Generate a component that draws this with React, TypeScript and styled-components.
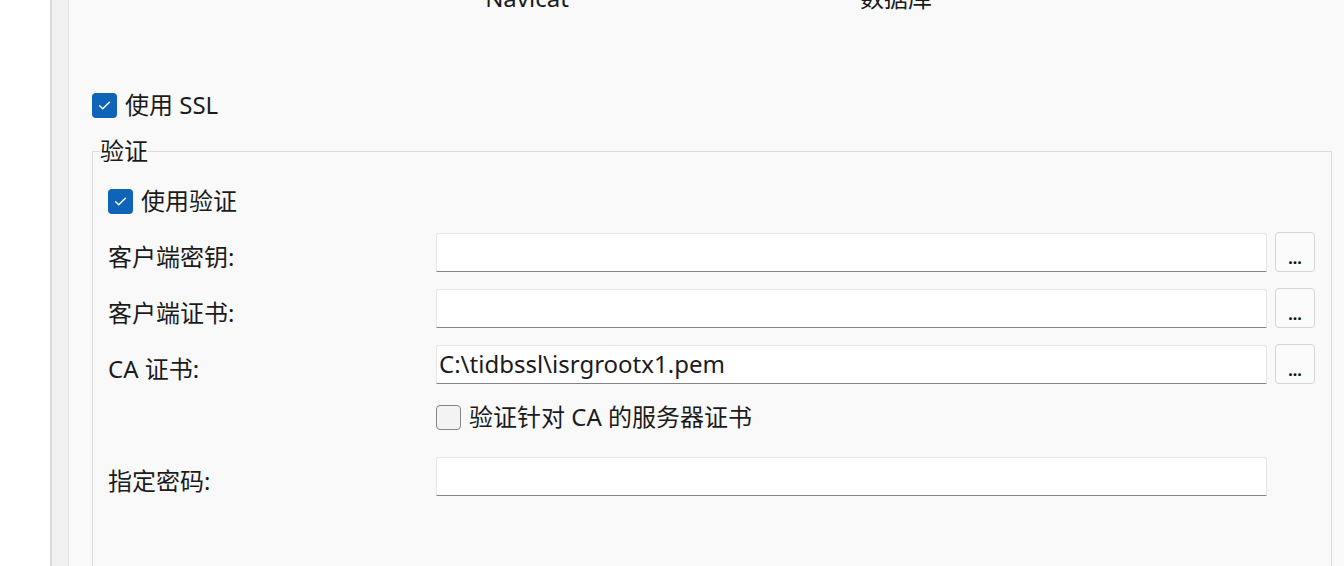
import React from "react";
import styled, { createGlobalStyle } from "styled-components";

const GlobalStyle = createGlobalStyle`
  html, body {
    margin: 0;
    padding: 0;
    background: #ffffff;
  }
  body {
    font-family: "Segoe UI", "Noto Sans", "Noto Sans CJK SC", sans-serif;
    color: #1b1b1b;
  }
`;

const Check: React.FC<{ checked?: boolean }> = ({ checked }) => (
  <Box $checked={checked}>
    {checked && (
      <svg width="25" height="25" viewBox="0 0 25 25">
        <path
          d="M7.6 12.8 L10.7 15.8 L17.4 9.2"
          fill="none"
          stroke="#ffffff"
          strokeWidth="1.4"
          strokeLinecap="round"
          strokeLinejoin="round"
        />
      </svg>
    )}
  </Box>
);

const App: React.FC = () => {
  return (
    <Wrapper>
      <GlobalStyle />
      <Gutter />
      <Strip />
      <Panel>
        <TopRow>
          <TopLabel>Navicat</TopLabel>
          <TopLabel>数据库</TopLabel>
        </TopRow>

        <CheckRow $top={79}>
          <Check checked />
          <CheckText>使用 SSL</CheckText>
        </CheckRow>

        <Group>
          <Legend>验证</Legend>
          <CheckRow $top={0}>
            <Check checked />
            <CheckText>使用验证</CheckText>
          </CheckRow>

          <FieldRow $top={17}>
            <Label>客户端密钥:</Label>
            <Input />
            <Browse>...</Browse>
          </FieldRow>
          <FieldRow $top={16}>
            <Label>客户端证书:</Label>
            <Input />
            <Browse>...</Browse>
          </FieldRow>
          <FieldRow $top={16}>
            <Label>CA 证书:</Label>
            <Input>C:\tidbssl\isrgrootx1.pem</Input>
            <Browse>...</Browse>
          </FieldRow>

          <FieldRow $top={21} $short>
            <span />
            <InlineCheck>
              <Check />
              <CheckText>验证针对 CA 的服务器证书</CheckText>
            </InlineCheck>
          </FieldRow>

          <FieldRow $top={25}>
            <Label>指定密码:</Label>
            <Input />
          </FieldRow>
        </Group>
      </Panel>
    </Wrapper>
  );
};

export default App;

const Wrapper = styled.div`
  display: flex;
  flex-direction: row;
  height: 566px;
  overflow: hidden;
`;

const Gutter = styled.div`
  width: 50px;
  flex-shrink: 0;
  background: #ffffff;
  border-right: 2px solid #dadada;
`;

const Strip = styled.div`
  width: 16px;
  flex-shrink: 0;
  background: #f0f0f0;
  border-right: 1px solid #e2e2e2;
`;

const Panel = styled.div`
  flex: 1;
  background: #f9f9f9;
  padding-left: 23px;
  overflow: hidden;
  display: flex;
  flex-direction: column;
`;

const TopRow = styled.div`
  display: grid;
  grid-template-columns: 200px 200px;
  column-gap: 169px;
  margin-top: -17px;
  padding-left: 335px;
  height: 30px;
`;

const TopLabel = styled.div`
  text-align: center;
  font-size: 24px;
  line-height: 30px;
`;

const CheckRow = styled.label<{ $top: number }>`
  display: flex;
  align-items: center;
  gap: 8px;
  height: 26px;
  margin-top: ${(p) => p.$top}px;
  font-size: 24px;
`;

const InlineCheck = styled.label`
  display: flex;
  align-items: center;
  gap: 8px;
  font-size: 24px;
`;

const Box = styled.span<{ $checked?: boolean }>`
  display: inline-flex;
  width: 25px;
  height: 25px;
  box-sizing: border-box;
  border-radius: 4px;
  background: ${(p) => (p.$checked ? "#0f63b8" : "#f3f3f3")};
  border: ${(p) => (p.$checked ? "none" : "1px solid #858585")};
  flex-shrink: 0;
`;

const CheckText = styled.span`
  line-height: 26px;
  white-space: nowrap;
`;

const Group = styled.fieldset`
  margin: 18px 12px 0 0;
  padding: 22px 15px 80px 15px;
  border: 1px solid #dcdcdc;
  min-width: 0;
`;

const Legend = styled.legend`
  padding: 0;
  margin-left: -8px;
  font-size: 24px;
  line-height: 30px;
`;

const FieldRow = styled.div<{ $top: number; $short?: boolean }>`
  display: grid;
  grid-template-columns: 320px 831px 40px;
  column-gap: 8px;
  align-items: center;
  height: ${(p) => (p.$short ? 26 : 40)}px;
  margin-top: ${(p) => p.$top}px;
`;

const Label = styled.div`
  font-size: 24px;
  white-space: nowrap;
  padding-top: 7px;
`;

const Input = styled.div`
  height: 39px;
  box-sizing: border-box;
  background: #ffffff;
  border: 1px solid #e6e6e6;
  border-bottom: 1.5px solid #858585;
  border-radius: 3px 3px 0 0;
  padding: 0 2px;
  font-size: 24px;
  line-height: 36px;
  white-space: nowrap;
  overflow: hidden;
`;

const Browse = styled.button`
  width: 40px;
  height: 40px;
  box-sizing: border-box;
  background: #fbfbfb;
  border: 1px solid #d5d5d5;
  border-radius: 4px;
  padding: 0 0 5px 0;
  font-family: inherit;
  font-size: 16px;
  font-weight: bold;
  color: #111111;
  line-height: 1;
  display: flex;
  align-items: flex-end;
  justify-content: center;
`;
